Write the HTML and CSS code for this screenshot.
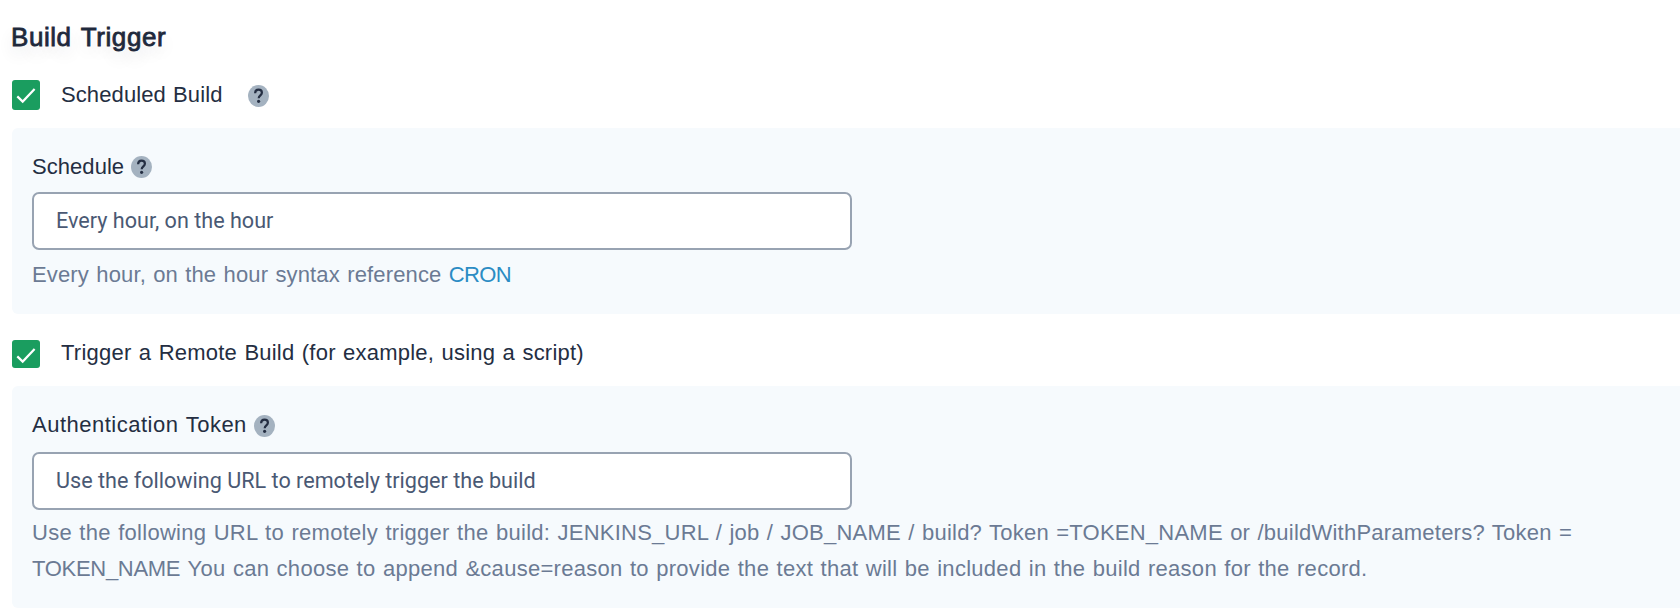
FILE: index.html
```
<!DOCTYPE html>
<html lang="en">
<head>
<meta charset="utf-8">
<title>Build Trigger</title>
<link rel="stylesheet" href="styles.css">
</head>
<body>
<svg class="symbols" aria-hidden="true">
  <symbol id="help" viewBox="0 0 21 22">
    <ellipse cx="10.5" cy="11" rx="10.5" ry="11" fill="#a4b2c0"/>
    <path d="M7.1 8.3C7.1 6 8.5 4.7 10.5 4.7s3.4 1.2 3.4 3.1c0 2.5-3.2 2.7-3.2 5.5" fill="none" stroke="#242e42" stroke-width="2.2"/>
    <circle cx="10.6" cy="16.3" r="1.6" fill="#242e42"/>
  </symbol>
  <symbol id="check" viewBox="0 0 28 30">
    <path d="M5.3 16.4 10.7 21.6 22.6 9.1" fill="none" stroke="#fff" stroke-width="2.2"/>
  </symbol>
</svg>
<main class="form">
  <h1 class="title">Build Trigger</h1>

  <div class="option">
    <span class="checkbox"><svg class="tick"><use href="#check"/></svg></span>
    <span class="option-label scheduled">Scheduled Build</span>
    <svg class="help help-wide"><use href="#help"/></svg>
  </div>
  <section class="panel schedule">
    <div class="field-label"><label for="schedule">Schedule</label><svg class="help"><use href="#help"/></svg></div>
    <input class="input" id="schedule" type="text" value="Every hour, on the hour">
    <p class="hint">Every hour, on the hour syntax reference <a class="link" href="#cron">CRON</a></p>
  </section>

  <div class="option remote">
    <span class="checkbox short"><svg class="tick"><use href="#check"/></svg></span>
    <span class="option-label">Trigger a Remote Build (for example, using a script)</span>
  </div>
  <section class="panel auth">
    <div class="field-label token"><label for="token">Authentication Token</label><svg class="help"><use href="#help"/></svg></div>
    <input class="input" id="token" type="text" value="Use the following URL to remotely trigger the build">
    <p class="hint"><span class="loose">Use the following URL to remotely trigger the build:</span> JENKINS_URL / job / JOB_NAME / build? Token =TOKEN_NAME or /buildWithParameters? Token =<br><span class="tight">TOKEN_NAME</span> <span class="loose">You can choose to append &amp;cause=reason to provide the text that will be included in the build reason for the record.</span></p>
  </section>
</main>
</body>
</html>
```
FILE: styles.css
```
* { box-sizing: border-box; }

body {
  margin: 0;
  background: #fff;
  color: #242e42;
  font: 22px/36px "Liberation Sans", Arial, sans-serif;
  letter-spacing: .23px;
  word-spacing: 1px;
}

.symbols { display: none; }

.form {
  display: flex;
  flex-direction: column;
  height: 608px;
  padding: 19px 0 0 12px;
  overflow: hidden;
}

.title {
  height: 61px;
  margin: 0 0 0 -1px;
  color: #1f293c;
  font-size: 26px;
  font-weight: 400;
  letter-spacing: .55px;
  word-spacing: 2px;
  -webkit-text-stroke: .8px #1f293c;
  text-shadow: 0 8px 16px rgba(36, 46, 66, .12);
}

.option {
  display: flex;
  align-items: flex-start;
  height: 48px;
}

.checkbox {
  display: flex;
  width: 28px;
  height: 30px;
  margin-right: 21px;
  border-radius: 3px;
  background: #1a9d5f;
  overflow: hidden;
}

.checkbox.short { height: 28px; }

.tick { flex: none; width: 28px; height: 30px; }

.option-label { margin-top: -3px; }

.scheduled { letter-spacing: .1px; }

.help {
  flex: none;
  display: block;
  width: 21px;
  height: 22px;
}

.help-wide { margin: 5px 0 0 25px; }

.panel {
  padding: 21px 20px 0;
  border-radius: 6px 0 0 6px;
  background: #f6fafd;
}

.schedule { height: 186px; }

.auth { height: 222px; }

.remote {
  height: 46px;
  margin-top: 26px;
}

.remote .option-label { margin-top: -5px; }

.field-label {
  display: flex;
  align-items: center;
  gap: 7px;
  height: 36px;
  letter-spacing: .05px;
}

.token { letter-spacing: .5px; }

.token .help { margin-top: 2px; }

.input {
  display: block;
  width: 820px;
  height: 58px;
  margin: 7px 0;
  padding: 0 0 1px 22px;
  border: 2px solid #98a3b2;
  border-radius: 7px;
  background: #fff;
  color: #4a5974;
  font: 21.6px Roboto, sans-serif;
  outline: 0;
}

.auth .input { margin: 9px 0 5px; }

.hint {
  margin: 0;
  color: #6b7a94;
  white-space: nowrap;
}

.schedule .hint { letter-spacing: .15px; }

.loose { letter-spacing: .28px; }

.tight { letter-spacing: -.3px; }

.link {
  color: #2b8cc4;
  letter-spacing: -.6px;
  text-decoration: none;
}
```
